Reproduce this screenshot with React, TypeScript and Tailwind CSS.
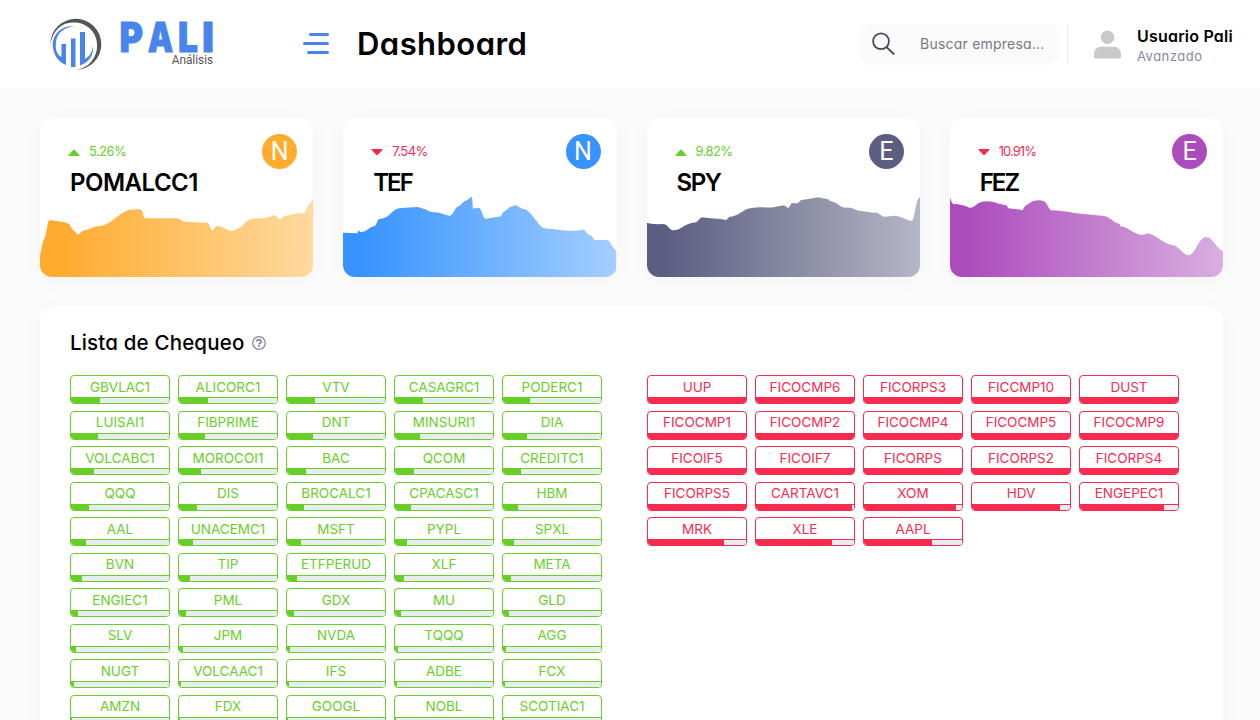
import React from 'react';

type Ticker = [name: string, fill: number];

const gains: Ticker[] = [
  ['GBVLAC1', 29], ['ALICORC1', 29], ['VTV', 28], ['CASAGRC1', 28], ['PODERC1', 27],
  ['LUISAI1', 27], ['FIBPRIME', 26], ['DNT', 26], ['MINSURI1', 25], ['DIA', 24],
  ['VOLCABC1', 23], ['MOROCOI1', 22], ['BAC', 19], ['QCOM', 19], ['CREDITC1', 18],
  ['QQQ', 18], ['DIS', 18], ['BROCALC1', 17], ['CPACASC1', 16], ['HBM', 15],
  ['AAL', 15], ['UNACEMC1', 14], ['MSFT', 14], ['PYPL', 12], ['SPXL', 11],
  ['BVN', 11], ['TIP', 11], ['ETFPERUD', 10], ['XLF', 9], ['META', 8],
  ['ENGIEC1', 7], ['PML', 7], ['GDX', 7], ['MU', 6], ['GLD', 6],
  ['SLV', 5], ['JPM', 4], ['NVDA', 3], ['TQQQ', 3], ['AGG', 3],
  ['NUGT', 3], ['VOLCAAC1', 2], ['IFS', 2], ['ADBE', 2], ['FCX', 2],
  ['AMZN', 1], ['FDX', 1], ['GOOGL', 1], ['NOBL', 1], ['SCOTIAC1', 1],
];

const losses: Ticker[] = [
  ['UUP', 98], ['FICOCMP6', 98], ['FICORPS3', 98], ['FICCMP10', 98], ['DUST', 98],
  ['FICOCMP1', 98], ['FICOCMP2', 98], ['FICOCMP4', 98], ['FICOCMP5', 98], ['FICOCMP9', 98],
  ['FICOIF5', 98], ['FICOIF7', 98], ['FICORPS', 98], ['FICORPS2', 98], ['FICORPS4', 98],
  ['FICORPS5', 98], ['CARTAVC1', 96], ['XOM', 92], ['HDV', 88], ['ENGEPEC1', 84],
  ['MRK', 76], ['XLE', 76], ['AAPL', 68],
];

const stocks = [
  {
    name: 'POMALCC1', pct: '5.26%', up: true, letter: 'N', color: '#ffab2d', badge: 'bg-[#ffab2d]', title: 'tracking-[-0.5px]',
    d: 'M0 436 C5 420 7 395 12 388 C20 378 22 331 28 331 C40 331 62 336 72 336 C80 339 86 341 90 345 C94 359 104 361 110 371 Q116 376 122 368 Q127 360 134 361 C150 359 156 349 180 348 C205 346 225 321 254 305 C266 299 276 299 300 298 Q307 300 310 314 Q312 325 318 325 L412 325 Q422 327 426 332 Q432 337 450 336 L500 338 Q507 337 510 350 Q516 364 520 360 Q525 348 534 348 C548 350 565 364 577 363 C587 359 590 355 600 353 C612 346 620 327 636 326 C660 325 680 324 690 320 Q708 312 712 320 Q718 331 722 328 Q728 318 738 317 C755 316 768 307 782 309 Q793 314 797 304 C802 285 812 286 820 261',
  },
  {
    name: 'TEF', pct: '7.54%', up: false, letter: 'N', color: '#3693ff', badge: 'bg-[#3693ff]', title: 'tracking-[-2px]',
    d: 'M0 368 L43 370 L47 361 L51 366 Q64 367 73 359 Q80 351 95 348 C102 344 102 326 111 326 C140 327 146 295 174 294 L226 291 Q233 294 242 296 C255 300 260 307 278 307 C298 309 305 316 318 317 C330 318 334 298 342 291 C356 286 361 272 368 272 C378 269 380 261 386 261 C390 272 388 292 391 296 Q396 293 410 294 C418 304 420 326 428 326 L474 319 Q478 305 492 299 C502 286 510 292 516 285 C530 289 532 296 540 296 C565 298 582 346 604 355 C635 358 660 362 687 363 Q708 361 720 359 C730 360 734 376 743 376 C750 380 752 390 757 391 L792 389 C802 390 809 414 820 423',
  },
  {
    name: 'SPY', pct: '9.82%', up: true, letter: 'E', color: '#5b5d81', badge: 'bg-[#5b5d81]', title: 'tracking-[-1.4px]',
    d: 'M0 339 Q20 343 34 343 Q52 341 58 345 C66 352 70 361 80 361 C98 361 112 344 134 339 L148 337 C156 332 156 322 170 322 C186 326 216 326 238 330 C246 324 246 319 254 320 C280 315 288 298 310 295 Q335 290 348 292 Q374 294 386 290 Q400 288 411 286 Q419 290 423 295 Q430 288 434 279 Q447 281 454 279 Q460 268 470 269 C485 267 500 265 514 262 Q534 267 542 267 Q550 276 562 277 C575 282 580 292 594 293 Q610 292 616 295 C630 302 640 304 660 305 Q678 309 690 308 C704 315 706 320 714 320 C728 320 738 316 750 318 C768 322 778 330 795 333 C806 324 804 268 820 261',
  },
  {
    name: 'FEZ', pct: '10.91%', up: false, letter: 'E', color: '#ac4cbc', badge: 'bg-[#ac4cbc]', title: 'tracking-[-2px]',
    d: 'M0 261 Q4 282 13 283 Q22 280 30 284 C42 286 50 288 58 293 Q66 295 74 288 C86 279 88 276 110 274 C134 274 148 284 170 286 L175 295 Q196 296 218 301 Q224 286 234 283 Q248 272 254 272 Q272 269 282 274 C292 278 292 292 303 301 C345 302 375 311 402 312 L462 318 C480 320 488 337 510 342 L511 349 C530 350 548 368 570 374 L583 374 Q590 368 602 373 C625 380 642 403 667 405 C688 408 698 434 715 436 C738 434 744 383 769 381 C790 381 800 418 820 424',
  },
];

function StockCard({ s, i }: { s: (typeof stocks)[number]; i: number }) {
  return (
    <article className="flex h-[159px] flex-col overflow-hidden rounded-xl bg-white shadow-[0_4px_22px_0_rgba(62,73,84,0.03)]">
      <div className="flex h-[79px] shrink-0 items-start justify-between pt-4 pr-4 pl-7">
        <div>
          <p className={`flex h-[35px] items-center text-[13px] ${s.pct.length > 5 ? 'tracking-[-0.95px]' : 'tracking-[-0.6px]'} ${s.up ? 'text-[#68cf29]' : 'text-[#f72b50]'}`}>
            <svg className={`mr-[9px] h-[7px] w-[12px] ${s.up ? 'mt-[2px]' : 'mt-[1px]'}`} viewBox="0 0 13 7" preserveAspectRatio="none">
              <path fill="currentColor" d={s.up ? 'M1 7 Q0 7 .7 6 L5.6 .9 Q6.5 0 7.4 .9 L12.3 6 Q13 7 12 7Z' : 'M1 0 Q0 0 .7 1 L5.6 5.7 Q6.5 6.6 7.4 5.7 L12.3 1 Q13 0 12 0Z'} />
            </svg>
            {s.pct}
          </p>
          <h2 className={`-mt-[2px] pl-[2px] text-[24px] leading-[32px] font-semibold text-black ${s.title}`}>{s.name}</h2>
        </div>
        <span className={`flex size-[35px] items-center justify-center rounded-full font-[Roboto,sans-serif] text-[25px] leading-none text-white ${s.badge}`}>{s.letter}</span>
      </div>
      <svg className="h-[80px] w-full shrink-0" viewBox="0 261 820 240" preserveAspectRatio="none">
        <defs>
          <linearGradient id={`area${i}`}>
            <stop offset="0" stopColor={s.color} />
            <stop offset="0.06" stopColor={s.color} />
            <stop offset="1" stopColor={s.color} stopOpacity="0.45" />
          </linearGradient>
        </defs>
        <path d={`${s.d} V501 H0Z`} fill={`url(#area${i})`} />
      </svg>
    </article>
  );
}

function TickerGrid({ items, tone }: { items: Ticker[]; tone: 'up' | 'down' }) {
  const frame = tone === 'up' ? 'border-[#68cf29] text-[#68cf29]' : 'border-[#f72b50] text-[#f72b50]';
  const bar = tone === 'up' ? 'bg-[#68cf29]' : 'bg-[#f72b50]';
  return (
    <div className="grid grid-cols-[repeat(5,100px)] content-start gap-x-2 gap-y-[6.5px]">
      {items.map(([name, fill]) => (
        <div key={name} className={`flex h-[29px] flex-col overflow-hidden rounded border ${frame}`}>
          <span className="mt-[0.7px] h-[20.36px] shrink-0 text-center text-[13.5px] leading-[21.8px]">{name}</span>
          <div className={`h-[6px] w-full shrink-0 border-t bg-[#e9ecef] ${tone === 'up' ? 'border-[#68cf29]' : 'border-[#f72b50]'}`}>
            <div className={`h-full ${bar}`} style={{ width: fill }} />
          </div>
        </div>
      ))}
    </div>
  );
}

function Logo() {
  return (
    <svg className="ml-[50px] h-[88px] w-[170px]" viewBox="50 0 170 88">
      <path fill="#555" d="M50.3 44 A25.5 25.5 0 1 1 76 69.8 A24 24 0 0 0 97 44 A22.5 22.5 0 0 0 74 22.5 C61 22 53 31 50.3 44Z" />
      <path fill="#4785ec" d="M75 26 C60 25 52 36 52.8 46 C53.5 56 59 62 66 65 V44 H61.5 V57 C57 55 55 49 56 42 C57 33 64 27 75 26Z" />
      <path fill="#4785ec" d="M71 38.5 H75.5 V67 H71Z M80 32 H85 V59 C90 56 92 52 93 46 C94 56 88 63 80 65.5Z" />
      <g fill="#4785ec" fontFamily="Inter, sans-serif" fontWeight="900" fontSize="41" stroke="#4785ec" strokeWidth="0.8">
        <text x="119.5" y="52.2" textLength="23.5" lengthAdjust="spacingAndGlyphs">P</text>
        <text x="147.8" y="52.2" textLength="25.5" lengthAdjust="spacingAndGlyphs">A</text>
        <text x="178" y="52.2" textLength="20" lengthAdjust="spacingAndGlyphs">L</text>
        <text x="202" y="52.2" textLength="12" lengthAdjust="spacingAndGlyphs">I</text>
      </g>
      <text x="171.7" y="64" fill="#555" fontFamily="Roboto, sans-serif" fontSize="12" textLength="41.5" lengthAdjust="spacingAndGlyphs">Análisis</text>
    </svg>
  );
}

export default function App() {
  return (
    <div className="h-[720px] w-[1260px] overflow-hidden bg-[#fbfbfb] font-[Inter,sans-serif] [font-feature-settings:'cv11']">
      <header className="flex h-[88px] items-center bg-white">
        <div className="flex h-full w-[274px] items-center border-r border-[#fdfdfd]">
          <Logo />
        </div>
        <svg className="ml-[29px] h-[22px] w-[27px]" viewBox="0 0 27 22" stroke="#4785ec" strokeWidth="3" strokeLinecap="round">
          <path d="M7.5 1.5H24.5M1.5 10.5H24.5M5.5 19.5H24.5" />
        </svg>
        <h1 className="ml-[27px] w-[200px] pb-px text-[31px] leading-none font-semibold tracking-[0.45px] text-black">Dashboard</h1>
        <div className="ml-auto flex h-[41px] w-[200px] items-center rounded-xl bg-[#fafafa]">
          <svg className="ml-[13px] size-[24px]" viewBox="0 0 24 24" fill="none" stroke="#464b52" strokeWidth="1.8">
            <circle cx="9" cy="9.2" r="7.9" />
            <path d="M14.5 15 L22.2 22.5" />
          </svg>
          <span className="ml-[24px] pb-px text-[14px] tracking-[0.22px] text-[#757b83]">Buscar empresa...</span>
        </div>
        <div className="ml-[8px] flex h-10 w-[193px] items-center border-l border-[#eeeeee]">
          <svg className="ml-[26px] h-[29px] w-[27px]" viewBox="0 0 27 29" fill="#c9c9c9">
            <circle cx="13.5" cy="7.3" r="6.7" />
            <path d="M0 25 C0 19 3 16.7 7.5 16.7 H19.5 C24 16.7 27 19 27 25 V27 Q27 28.5 25 28.5 H2 Q0 28.5 0 27Z" />
          </svg>
          <div className="ml-[16px] pt-1">
            <p className="text-[16px] leading-5 font-semibold tracking-[0.2px] text-black">Usuario Pali</p>
            <p className="text-[13px] leading-5 tracking-[0.5px] text-[#89879f]">Avanzado</p>
          </div>
        </div>
      </header>
      <main className="pt-[30px] pr-[37px] pl-10">
        <section className="grid grid-cols-4 gap-[30px]">
          {stocks.map((s, i) => <StockCard key={s.name} s={s} i={i} />)}
        </section>
        <section className="mt-[30px] rounded-xl bg-white px-[30px] pt-[21px] pb-8 shadow-[0_4px_22px_0_rgba(62,73,84,0.03)]">
          <h2 className="flex h-[30px] items-center text-[20.5px] font-medium tracking-[0.17px] text-black">
            Lista de Chequeo
            <svg className="ml-[8px] size-[14px]" viewBox="0 0 14 14" fill="none" stroke="#89879f" strokeWidth="1.3">
              <circle cx="7" cy="7" r="6.3" />
              <path strokeWidth="1.8" d="M4.8 5.5 C4.9 3.2 9.2 3.1 9.2 5.5 C9.2 7 7 6.8 7 8.4 M7 9.3 V11" />
            </svg>
          </h2>
          <div className="mt-[17px] flex gap-[45px]">
            <TickerGrid items={gains} tone="up" />
            <TickerGrid items={losses} tone="down" />
          </div>
        </section>
      </main>
    </div>
  );
}
